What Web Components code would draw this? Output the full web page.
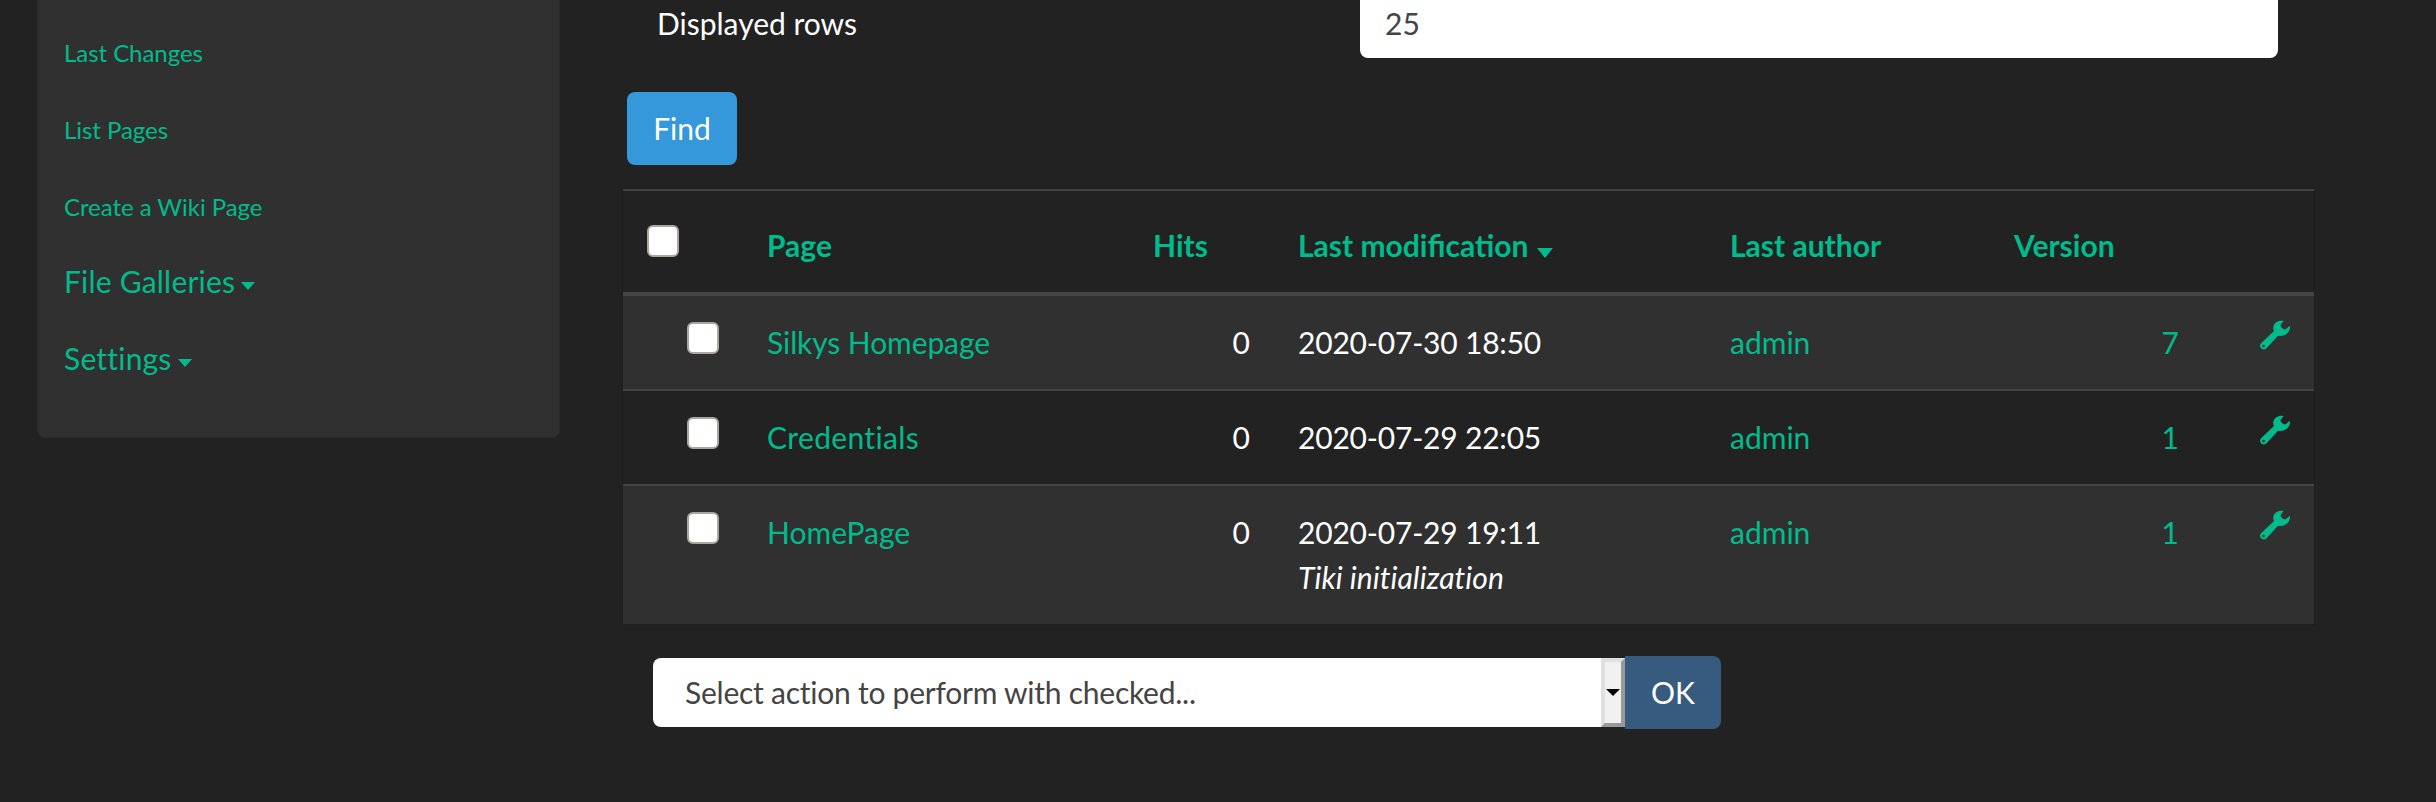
<!DOCTYPE html>
<html>
<head>
<meta charset="utf-8">
<title>Pages</title>
<style>
  html, body { margin: 0; height: 802px; overflow: hidden; background: #222; }
  body { font: 30px/45px Lato, "Liberation Sans", sans-serif; color: #fff; }
  .layout { display: grid; grid-template-columns: 523px 1691px; column-gap: 63px; padding-left: 37px; align-items: start; }
</style>
</head>
<body>
<div class="layout">
  <side-menu>
    <menu-link href="#">Last Changes</menu-link>
    <menu-link href="#">List Pages</menu-link>
    <menu-link href="#">Create a Wiki Page</menu-link>
    <menu-link section>File Galleries</menu-link>
    <menu-link section>Settings</menu-link>
  </side-menu>
  <main>
    <filter-form label="Displayed rows" value="25"></filter-form>
    <page-table>
      <page-row name="Silkys Homepage" spacing="-0.1px" hits="0" date="2020-07-30 18:50" author="admin" version="7" striped></page-row>
      <page-row name="Credentials" spacing="0.35px" hits="0" date="2020-07-29 22:05" author="admin" version="1"></page-row>
      <page-row name="HomePage" hits="0" date="2020-07-29 19:11" author="admin" version="1" note="Tiki initialization" striped></page-row>
    </page-table>
    <action-bar></action-bar>
  </main>
</div>

<script>
const COLS = '120px 386px 145px 432px 284px 213px 111px';
const CHECK = `
  .check { display: block; box-sizing: border-box; width: 32px; height: 32px; background: #fff; border: 2px solid #aaa69f; border-radius: 6px; }
`;
const WRENCH = '<svg viewBox="30 30 90 90" width="30" height="30"><path fill="#00bc8c" fill-rule="evenodd" d="M101 33C88 29 73 36 70 50C69 55 70 60 72 63L34 99C28 105 30 113 35 116C41 120 47 118 51 113L84 77C90 79 97 78 104 75C115 70 121 59 120 47L107 58C101 59 93 54 91 46ZM41 104a4 4 0 1 0 .01 0Z"/></svg>';

class SideMenu extends HTMLElement {
    constructor() {
        super();
        const shadow = this.attachShadow({ mode: 'open' });
        shadow.innerHTML = `
            <style>
            :host { display: block; box-sizing: border-box; height: 438px; padding: 14px 26px 0; background: #303030; border: 1px solid #2a2a2a; border-top: 0; border-radius: 0 0 8px 8px; }
            .list { display: grid; grid-auto-rows: 77px; align-items: center; }
            </style>
            <div class="list"><slot></slot></div>
        `;
    }
}

class MenuLink extends HTMLElement {
    constructor() {
        super();
        const shadow = this.attachShadow({ mode: 'open' });
        const section = this.hasAttribute('section');
        shadow.innerHTML = `
            <style>
            :host { display: block; color: #00bc8c; font-size: 24px; line-height: 45px; letter-spacing: -0.05px; }
            :host([section]) { font-size: 30px; letter-spacing: 0.2px; margin-bottom: 4px; }
            .caret { display: inline-block; width: 0; height: 0; margin-left: 6px; vertical-align: 3px; border: 7px solid transparent; border-top: 8px solid #00bc8c; border-bottom: 0; }
            </style>
            <slot></slot>${section ? '<span class="caret"></span>' : ''}
        `;
    }
}

class FilterForm extends HTMLElement {
    constructor() {
        super();
        const shadow = this.attachShadow({ mode: 'open' });
        shadow.innerHTML = `
            <style>
            :host { display: block; margin-top: -11px; }
            .row { display: grid; grid-template-columns: 703px 918px; padding-left: 34px; height: 69px; align-items: center; }
            .input { box-sizing: border-box; height: 69px; padding: 12px 25px; background: #fff; color: #444; border-radius: 8px; }
            .find { display: block; box-sizing: border-box; width: 110px; height: 73px; margin: 34px 0 24px 4px; padding: 14px 0; background: #3498db; color: #fff; text-align: center; border-radius: 8px; }
            </style>
            <div class="row"><span>${this.getAttribute('label')}</span><div class="input">${this.getAttribute('value')}</div></div>
            <div class="find">Find</div>
        `;
    }
}

class PageTable extends HTMLElement {
    constructor() {
        super();
        const shadow = this.attachShadow({ mode: 'open' });
        shadow.innerHTML = `
            <style>
            :host { display: block; outline: 1px solid #1e1e1e; }
            .head { display: grid; grid-template-columns: ${COLS}; height: 101px; border-top: 2px solid #444; border-bottom: 4px solid #444; color: #00bc8c; font-weight: 700; }
            .head > * { padding: 32px 24px 0; }
            .head > .first { padding: 34px 0 0 24px; }
            .caret { display: inline-block; width: 0; height: 0; margin-left: 9px; vertical-align: -1px; border: 8px solid transparent; border-top: 10px solid #00bc8c; border-bottom: 0; }
            ${CHECK}
            </style>
            <div class="head">
                <div class="first"><span class="check"></span></div>
                <div>Page</div>
                <div>Hits</div>
                <div>Last modification<span class="caret"></span></div>
                <div>Last author</div>
                <div>Version</div>
                <div></div>
            </div>
            <slot></slot>
        `;
    }
}

class PageRow extends HTMLElement {
    constructor() {
        super();
        const shadow = this.attachShadow({ mode: 'open' });
        const a = (n) => this.getAttribute(n) || '';
        shadow.innerHTML = `
            <style>
            :host { display: block; border-bottom: 2px solid #444; }
            :host([striped]) { background: #303030; }
            :host(:last-child) { border-bottom: 0; }
            .row { display: grid; grid-template-columns: ${COLS}; padding: 24px 0; }
            .row > * { padding: 0 24px; }
            .link { color: #00bc8c; }
            .right { text-align: right; }
            .box { display: flex; justify-content: flex-end; padding-top: 2px; }
            .tool { display: flex; justify-content: flex-end; height: 45px; }
            .date { letter-spacing: -0.2px; }
            em { display: block; letter-spacing: 0.08px; }
            ${CHECK}
            </style>
            <div class="row">
                <div class="box"><span class="check"></span></div>
                <div class="link" style="letter-spacing: ${a('spacing') || 'normal'}">${a('name')}</div>
                <div class="right">${a('hits')}</div>
                <div><span class="date">${a('date')}</span>${a('note') ? `<em>${a('note')}</em>` : ''}</div>
                <div class="link">${a('author')}</div>
                <div class="link right">${a('version')}</div>
                <div class="tool">${WRENCH}</div>
            </div>
        `;
    }
}

class ActionBar extends HTMLElement {
    constructor() {
        super();
        const shadow = this.attachShadow({ mode: 'open' });
        shadow.innerHTML = `
            <style>
            :host { display: flex; align-items: center; margin: 32px 0 0 30px; }
            .select { display: flex; width: 972px; height: 69px; background: #fff; color: #444; border-radius: 8px 0 0 8px; overflow: hidden; }
            .text { flex: 1; padding: 12px 32px; letter-spacing: -0.24px; }
            .arrow { box-sizing: border-box; display: flex; align-items: center; justify-content: center; width: 24px; background: #f0f0f0; border: 4px solid; border-color: #e0e0e0 #999 #999 #e0e0e0; }
            .arrow i { width: 0; height: 0; border: 7px solid transparent; border-top: 7px solid #000; border-bottom: 0; }
            .ok { box-sizing: border-box; width: 96px; height: 73px; padding: 14px 0; background: #375a7f; color: #fff; text-align: center; border-radius: 0 8px 8px 0; }
            </style>
            <div class="select"><div class="text">Select action to perform with checked...</div><div class="arrow"><i></i></div></div>
            <div class="ok">OK</div>
        `;
    }
}

customElements.define('side-menu', SideMenu);
customElements.define('menu-link', MenuLink);
customElements.define('filter-form', FilterForm);
customElements.define('page-table', PageTable);
customElements.define('page-row', PageRow);
customElements.define('action-bar', ActionBar);
</script>
</body>
</html>
